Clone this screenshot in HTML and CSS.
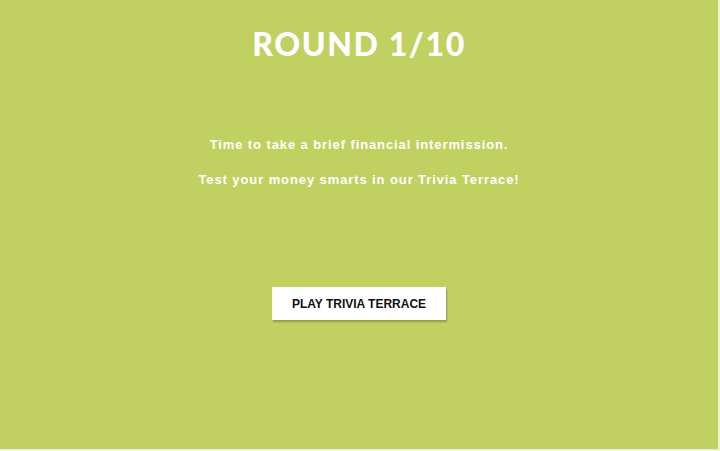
FILE: index.html
```html
<!DOCTYPE html>
<html lang="en">
<head>
  <meta charset="UTF-8">
  <meta name="viewport" content="width=device-width, initial-scale=1">
  <title>Round 1/10</title>
  <link rel="stylesheet" href="styles.css">
</head>
<body>
  <div class="stage">
    <h1>ROUND 1/10</h1>
    <div class="message">
      <p>Time to take a brief financial intermission.</p>
      <p>Test your money smarts in our Trivia Terrace!</p>
    </div>
    <button class="play">PLAY TRIVIA TERRACE</button>
  </div>
</body>
</html>
```

FILE: styles.css
```css
body {
  margin: 0;
  background: #eef2dc;
}
.stage {
  width: 718px;
  height: 449px;
  background: #c0d161;
  display: flex;
  flex-direction: column;
  align-items: center;
  color: white;
}
h1 {
  font-family: Lato, "Open Sans", sans-serif;
  font-weight: 900;
  font-size: 32px;
  letter-spacing: 1.6px;
  margin: 26px 0 0;
  line-height: 36px;
}
.message {
  margin-top: 75px;
  text-align: center;
  font-family: "Liberation Sans", Arial, sans-serif;
  font-weight: bold;
  font-size: 13px;
  letter-spacing: 0.9px;
}
.message p {
  margin: 0 0 20px;
  line-height: 15px;
}
.play {
  margin-top: 80px;
  width: 174px;
  height: 33px;
  background: white;
  border: none;
  box-shadow: 1px 2px 2px rgba(0,0,0,0.25);
  font-family: "Liberation Sans", Arial, sans-serif;
  font-weight: bold;
  font-size: 12px;
  color: #111;
  cursor: pointer;
}
```
